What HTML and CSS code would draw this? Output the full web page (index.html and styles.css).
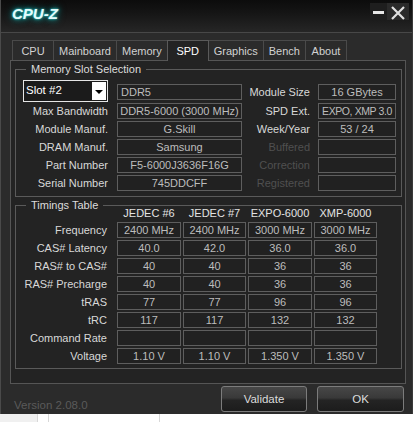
FILE: index.html
```html
<!DOCTYPE html>
<html>
<head>
<meta charset="utf-8">
<title>CPU-Z</title>
<link rel="stylesheet" href="styles.css">
</head>
<body>
<div class="window">
  <div class="titlebar">
    <div class="title">CPU-Z</div>
    <div class="winbtns">
      <div class="wbtn min"><svg width="17" height="17" viewBox="0 0 17 17"><rect x="3" y="8" width="11" height="3" fill="#e8e8e8"/></svg></div>
      <div class="wbtn close"><svg width="22" height="17" viewBox="0 0 22 17"><path d="M5 4 L17 16 M17 4 L5 16" stroke="#e0e0e0" stroke-width="2.2" fill="none"/></svg></div>
    </div>
  </div>
  <div class="tabs">
    <div class="tab">CPU</div>
    <div class="tab">Mainboard</div>
    <div class="tab">Memory</div>
    <div class="tab active">SPD</div>
    <div class="tab">Graphics</div>
    <div class="tab">Bench</div>
    <div class="tab">About</div>
  </div>
  <div class="panel">
    <div class="group">
      <div class="legend">Memory Slot Selection</div>
      <div class="slotgrid">
        <div class="select"><span class="seltext">Slot #2</span><span class="selbtn"><svg width="12" height="18" viewBox="0 0 12 18"><path d="M2 8 L10 8 L6 12 Z" fill="#000"/></svg></span></div>
        <div class="box left first">DDR5</div>
        <div class="lbl r first">Module Size</div>
        <div class="box first">16 GBytes</div>

        <div class="lbl">Max Bandwidth</div>
        <div class="box">DDR5-6000 (3000 MHz)</div>
        <div class="lbl r">SPD Ext.</div>
        <div class="box tight">EXPO, XMP 3.0</div>

        <div class="lbl">Module Manuf.</div>
        <div class="box">G.Skill</div>
        <div class="lbl r">Week/Year</div>
        <div class="box">53 / 24</div>

        <div class="lbl">DRAM Manuf.</div>
        <div class="box">Samsung</div>
        <div class="lbl r dis">Buffered</div>
        <div class="box"></div>

        <div class="lbl">Part Number</div>
        <div class="box">F5-6000J3636F16G</div>
        <div class="lbl r dis">Correction</div>
        <div class="box"></div>

        <div class="lbl">Serial Number</div>
        <div class="box">745DDCFF</div>
        <div class="lbl r dis">Registered</div>
        <div class="box"></div>
      </div>
    </div>
    <div class="group g2">
      <div class="legend">Timings Table</div>
      <div class="timegrid">
        <div></div>
        <div class="head">JEDEC #6</div>
        <div class="head">JEDEC #7</div>
        <div class="head">EXPO-6000</div>
        <div class="head">XMP-6000</div>

        <div class="tlbl">Frequency</div>
        <div class="box">2400 MHz</div><div class="box">2400 MHz</div><div class="box">3000 MHz</div><div class="box">3000 MHz</div>

        <div class="tlbl">CAS# Latency</div>
        <div class="box">40.0</div><div class="box">42.0</div><div class="box">36.0</div><div class="box">36.0</div>

        <div class="tlbl">RAS# to CAS#</div>
        <div class="box">40</div><div class="box">40</div><div class="box">36</div><div class="box">36</div>

        <div class="tlbl">RAS# Precharge</div>
        <div class="box">40</div><div class="box">40</div><div class="box">36</div><div class="box">36</div>

        <div class="tlbl">tRAS</div>
        <div class="box">77</div><div class="box">77</div><div class="box">96</div><div class="box">96</div>

        <div class="tlbl">tRC</div>
        <div class="box">117</div><div class="box">117</div><div class="box">132</div><div class="box">132</div>

        <div class="tlbl">Command Rate</div>
        <div class="box"></div><div class="box"></div><div class="box"></div><div class="box"></div>

        <div class="tlbl">Voltage</div>
        <div class="box">1.10 V</div><div class="box">1.10 V</div><div class="box">1.350 V</div><div class="box">1.350 V</div>
      </div>
    </div>
  </div>
  <div class="footer">
    <div class="version">Version 2.08.0</div>
    <div class="buttons">
      <div class="button validate">Validate</div>
      <div class="button ok">OK</div>
    </div>
  </div>
</div>
<div class="below">
  <div class="seg s1"></div>
  <div class="seg s2"></div>
  <div class="seg s3"></div>
</div>
</body>
</html>
```
FILE: styles.css
```css
html, body {
  margin: 0;
  padding: 0;
}
body {
  background: #ffffff;
  width: 417px;
  height: 422px;
  overflow: hidden;
  font-family: "Liberation Sans", Arial, sans-serif;
  font-size: 11px;
  color: #dcdcdc;
}
.window {
  width: 413px;
  height: 414px;
  box-sizing: border-box;
  background: #2b2b2b;
  border-left: 1px solid #4a4a4a;
  border-right: 1px solid #3a3a3a;
  display: flex;
  flex-direction: column;
}
.titlebar {
  height: 32px;
  border-bottom: 1px solid #484848;
  background: linear-gradient(#0c0c0c 0%, #151515 40%, #262626 100%);
  display: flex;
  justify-content: space-between;
  align-items: flex-start;
  padding-left: 11px;
  flex: none;
}
.title {
  font-family: "Liberation Sans", Arial, sans-serif;
  font-weight: bold;
  font-style: italic;
  font-size: 15px;
  line-height: 18px;
  margin-top: 5px;
  color: #e4fcfc;
  text-shadow: 0 0 2px #3fe8e8, 0 0 5px #14b4b4, 0 0 8px #0a7a7a;
}
.winbtns {
  display: flex;
  margin-top: 3px;
  margin-right: 3px;
}
.wbtn {
  height: 17px;
  display: flex;
}
.wbtn.min {
  width: 17px;
  background: #1e1e1e;
}
.wbtn.close {
  width: 22px;
  background: #2a2a2a;
}
.tabs {
  display: flex;
  align-items: flex-end;
  height: 27px;
  padding-left: 11px;
  flex: none;
}
.tab {
  position: relative;
  height: 20px;
  box-sizing: border-box;
  border: 1px solid #4a4a4a;
  border-bottom: none;
  margin-right: -1px;
  padding: 0 5px;
  min-width: 42px;
  text-align: center;
  line-height: 20px;
  font-size: 11px;
  color: #d2d2d2;
  background: #2b2b2b;
}
.tab.active {
  height: 21px;
  background: #232323;
  color: #ffffff;
  z-index: 2;
  margin-bottom: -1px;
  line-height: 21px;
  border-color: #5a5a5a;
}
.panel {
  height: 324px;
  box-sizing: border-box;
  margin: 0 6px 0 9px;
  border: 1px solid #555555;
  background: #232323;
  padding: 8px 3px 0 4px;
  display: flex;
  flex-direction: column;
  flex: none;
}
.group {
  border: 1px solid #5a5a5a;
  padding-bottom: 5px;
  display: flex;
  flex-direction: column;
}
.group.g2 {
  margin-top: 8px;
  padding-bottom: 4px;
}
.legend {
  align-self: flex-start;
  margin: -8px 0 0 10px;
  padding: 0 5px;
  background: #232323;
  line-height: 14px;
  font-size: 11px;
  color: #dcdcdc;
}
.slotgrid {
  margin-top: 4px;
  display: grid;
  grid-template-columns: 101px 125px 76px 78px;
  grid-template-rows: 21px repeat(5, 16px);
  row-gap: 2px;
}
.lbl {
  text-align: right;
  padding-right: 9px;
  line-height: 16px;
  white-space: nowrap;
  font-size: 11px;
  color: #d8d8d8;
}
.lbl.r {
  padding-right: 8px;
}
.lbl.first, .box.first {
  align-self: end;
  margin-bottom: 1px;
}
.lbl.dis {
  color: #505050;
}
.box {
  height: 16px;
  box-sizing: border-box;
  border: 1px solid #5e5e5e;
  background: #212121;
  color: #bdbdbd;
  text-align: center;
  line-height: 14px;
  white-space: nowrap;
  overflow: hidden;
  font-size: 11px;
}
.box.tight {
  letter-spacing: -0.4px;
  font-size: 10.5px;
}
.box.left {
  text-align: left;
  padding-left: 3px;
}
.select {
  margin-left: 7px;
  margin-right: 9px;
  height: 22px;
  box-sizing: border-box;
  border: 1px solid #e6e6e6;
  background: #1b1b1b;
  display: flex;
  justify-content: space-between;
  align-items: stretch;
}
.seltext {
  color: #ffffff;
  font-size: 11.5px;
  line-height: 18px;
  padding-left: 2px;
}
.selbtn {
  width: 14px;
  margin: 1px;
  background: #ffffff;
  display: flex;
  justify-content: center;
}
.timegrid {
  margin-top: -5px;
  display: grid;
  grid-template-columns: 99px 64px 63px 64px 63px;
  grid-template-rows: 13px repeat(8, 16px);
  column-gap: 2px;
  row-gap: 2px;
}
.head {
  text-align: center;
  line-height: 13px;
  font-size: 11px;
  color: #e4e4e4;
  white-space: nowrap;
}
.tlbl {
  text-align: right;
  padding-right: 8px;
  line-height: 16px;
  font-size: 11px;
  color: #d8d8d8;
  white-space: nowrap;
}
.footer {
  flex: 1;
  display: flex;
  justify-content: space-between;
  align-items: flex-end;
  padding: 0 8px 2px 13px;
}
.version {
  color: #5a5a5a;
  font-size: 11.5px;
  line-height: 14px;
}
.buttons {
  display: flex;
  gap: 10px;
}
.button {
  height: 26px;
  box-sizing: border-box;
  border: 1px solid #7c7c7c;
  border-radius: 3px;
  background: linear-gradient(#474747 0%, #393939 45%, #242424 55%, #1c1c1c 100%);
  color: #dcdcdc;
  font-size: 11.5px;
  line-height: 24px;
  text-align: center;
}
.button.validate {
  width: 86px;
}
.button.ok {
  width: 87px;
}
.below {
  display: flex;
  height: 8px;
}
.seg.s1 {
  width: 37px;
  background: #f0f0f0;
  border-right: 1px solid #d8d8d8;
}
.seg.s2 {
  width: 110px;
  border-left: 1px solid #d8d8d8;
  margin-left: 10px;
  border-right: 1px solid #d8d8d8;
}
.seg.s3 {
  flex: 1;
}
```
